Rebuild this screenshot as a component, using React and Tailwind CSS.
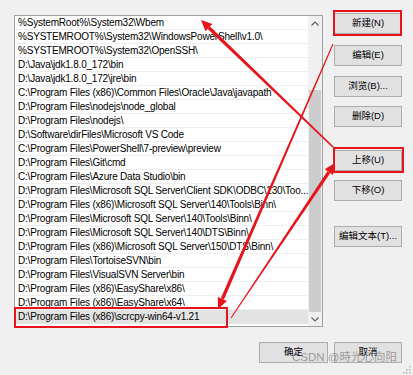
import React from "react";

const rows = [
  "%SystemRoot%\\System32\\Wbem",
  "%SYSTEMROOT%\\System32\\WindowsPowerShell\\v1.0\\",
  "%SYSTEMROOT%\\System32\\OpenSSH\\",
  "D:\\Java\\jdk1.8.0_172\\bin",
  "D:\\Java\\jdk1.8.0_172\\jre\\bin",
  "C:\\Program Files (x86)\\Common Files\\Oracle\\Java\\javapath",
  "D:\\Program Files\\nodejs\\node_global",
  "D:\\Program Files\\nodejs\\",
  "D:\\Software\\dirFiles\\Microsoft VS Code",
  "C:\\Program Files\\PowerShell\\7-preview\\preview",
  "D:\\Program Files\\Git\\cmd",
  "C:\\Program Files\\Azure Data Studio\\bin",
  "D:\\Program Files\\Microsoft SQL Server\\Client SDK\\ODBC\\130\\Too...",
  "D:\\Program Files (x86)\\Microsoft SQL Server\\140\\Tools\\Binn\\",
  "D:\\Program Files\\Microsoft SQL Server\\140\\Tools\\Binn\\",
  "D:\\Program Files\\Microsoft SQL Server\\140\\DTS\\Binn\\",
  "D:\\Program Files (x86)\\Microsoft SQL Server\\150\\DTS\\Binn\\",
  "D:\\Program Files\\TortoiseSVN\\bin",
  "D:\\Program Files\\VisualSVN Server\\bin",
  "D:\\Program Files (x86)\\EasyShare\\x86\\",
  "D:\\Program Files (x86)\\EasyShare\\x64\\",
  "D:\\Program Files (x86)\\scrcpy-win64-v1.21",
];

function Btn({ children, className = "" }) {
  return (
    <div
      className={
        "h-[21px] flex items-center justify-center bg-[#e1e1e1] border border-[#adadad] text-[9.5px] text-black font-['Liberation_Sans','Noto_Sans_CJK_SC',sans-serif] " +
        className
      }
    >
      {children}
    </div>
  );
}

function arrowPoints(x1, y1, x2, y2, w0, w1, hl, hw) {
  const dx = x2 - x1;
  const dy = y2 - y1;
  const L = Math.hypot(dx, dy);
  const ux = dx / L;
  const uy = dy / L;
  const nx = -uy;
  const ny = ux;
  const bx = x2 - ux * hl;
  const by = y2 - uy * hl;
  const shaft = [
    [x1 + (nx * w0) / 2, y1 + (ny * w0) / 2],
    [bx + (nx * w1) / 2, by + (ny * w1) / 2],
    [bx - (nx * w1) / 2, by - (ny * w1) / 2],
    [x1 - (nx * w0) / 2, y1 - (ny * w0) / 2],
  ];
  const head = [
    [x2, y2],
    [bx + nx * hw, by + ny * hw],
    [bx - nx * hw, by - ny * hw],
  ];
  const f = (p) => p.map((q) => q[0].toFixed(1) + "," + q[1].toFixed(1)).join(" ");
  return [f(shaft), f(head)];
}

function Arrow({ x1, y1, x2, y2, w0 = 1, w1 = 3.5 }) {
  const [s, h] = arrowPoints(x1, y1, x2, y2, w0, w1, 11, 5);
  return (
    <g fill="#e8141c">
      <polygon points={s} />
      <polygon points={h} />
    </g>
  );
}

export default function App() {
  return (
    <div className="relative w-[413px] h-[375px] bg-[#f0f0f0] overflow-hidden font-['Liberation_Sans',sans-serif]">
      <div className="flex items-start pt-[12px] pl-[14px]">
        <div className="mt-[3px] w-[309px] h-[312px] border border-[#a0a0a0] bg-white flex">
          <div className="flex-1 flex flex-col">
            {rows.map((r, i) => (
              <div
                key={i}
                className={
                  "h-[14px] pl-[3px] flex items-center whitespace-nowrap overflow-hidden text-[10px] tracking-[-0.2px] text-black leading-none " +
                  (i === rows.length - 1 ? "bg-[#e3e3e3]" : "border-b border-[#efefef]")
                }
              >
                {r}
              </div>
            ))}
          </div>
          <div className="w-[14px] bg-[#f0f0f0] flex flex-col">
            <div className="h-[14px] flex items-center justify-center">
              <svg width="8" height="5" viewBox="0 0 8 5">
                <polyline points="0.5,4.5 4,1 7.5,4.5" fill="none" stroke="#606060" strokeWidth="1.2" />
              </svg>
            </div>
            <div className="mt-[60px] mx-[1px] h-[222px] bg-[#cdcdcd]" />
            <div className="flex-1 flex items-center justify-center">
              <svg width="8" height="5" viewBox="0 0 8 5">
                <polyline points="0.5,0.5 4,4 7.5,0.5" fill="none" stroke="#606060" strokeWidth="1.2" />
              </svg>
            </div>
          </div>
        </div>
        <div className="ml-[11px] w-[68px] flex flex-col">
          <Btn className="mt-[1px]">新建(N)</Btn>
          <Btn className="mt-[11px]">编辑(E)</Btn>
          <Btn className="mt-[10px]">浏览(B)...</Btn>
          <Btn className="mt-[9px]">删除(D)</Btn>
          <Btn className="mt-[23px]">上移(U)</Btn>
          <Btn className="mt-[9px]">下移(O)</Btn>
          <Btn className="mt-[25px]">编辑文本(T)...</Btn>
        </div>
      </div>
      <div className="flex justify-end gap-[6px] pr-[11px] mt-[15px]">
        <Btn className="w-[69px]">确定</Btn>
        <Btn className="w-[68px]">取消</Btn>
      </div>

      <svg className="absolute inset-0 pointer-events-none" width="413" height="375" viewBox="0 0 413 375">
        <rect x="334" y="11" width="67" height="24" fill="none" stroke="#e8141c" strokeWidth="2" />
        <rect x="334" y="148" width="69" height="24" fill="none" stroke="#e8141c" strokeWidth="2" />
        <rect x="15" y="308" width="212" height="19" fill="none" stroke="#e8141c" strokeWidth="2" />
        <Arrow x1={333} y1={147} x2={201} y2={20} w0={1.6} w1={3.5} />
        <Arrow x1={333} y1={44} x2={218} y2={309} w0={1} w1={3.5} />
        <Arrow x1={231} y1={318} x2={335} y2={163} w0={1} w1={3.5} />
        <g fill="#b0b0b0">
          <rect x="409" y="366" width="1.5" height="1.5" />
          <rect x="406" y="369" width="1.5" height="1.5" />
          <rect x="409" y="369" width="1.5" height="1.5" />
          <rect x="403" y="372" width="1.5" height="1.5" />
          <rect x="406" y="372" width="1.5" height="1.5" />
          <rect x="409" y="372" width="1.5" height="1.5" />
        </g>
      </svg>

      <div className="absolute left-[292px] top-[352px] text-[11.5px] leading-none whitespace-nowrap text-[rgba(120,120,120,0.7)] font-['Liberation_Sans','Noto_Sans_CJK_SC',sans-serif]">
        CSDN @時光心向阳
      </div>
    </div>
  );
}
